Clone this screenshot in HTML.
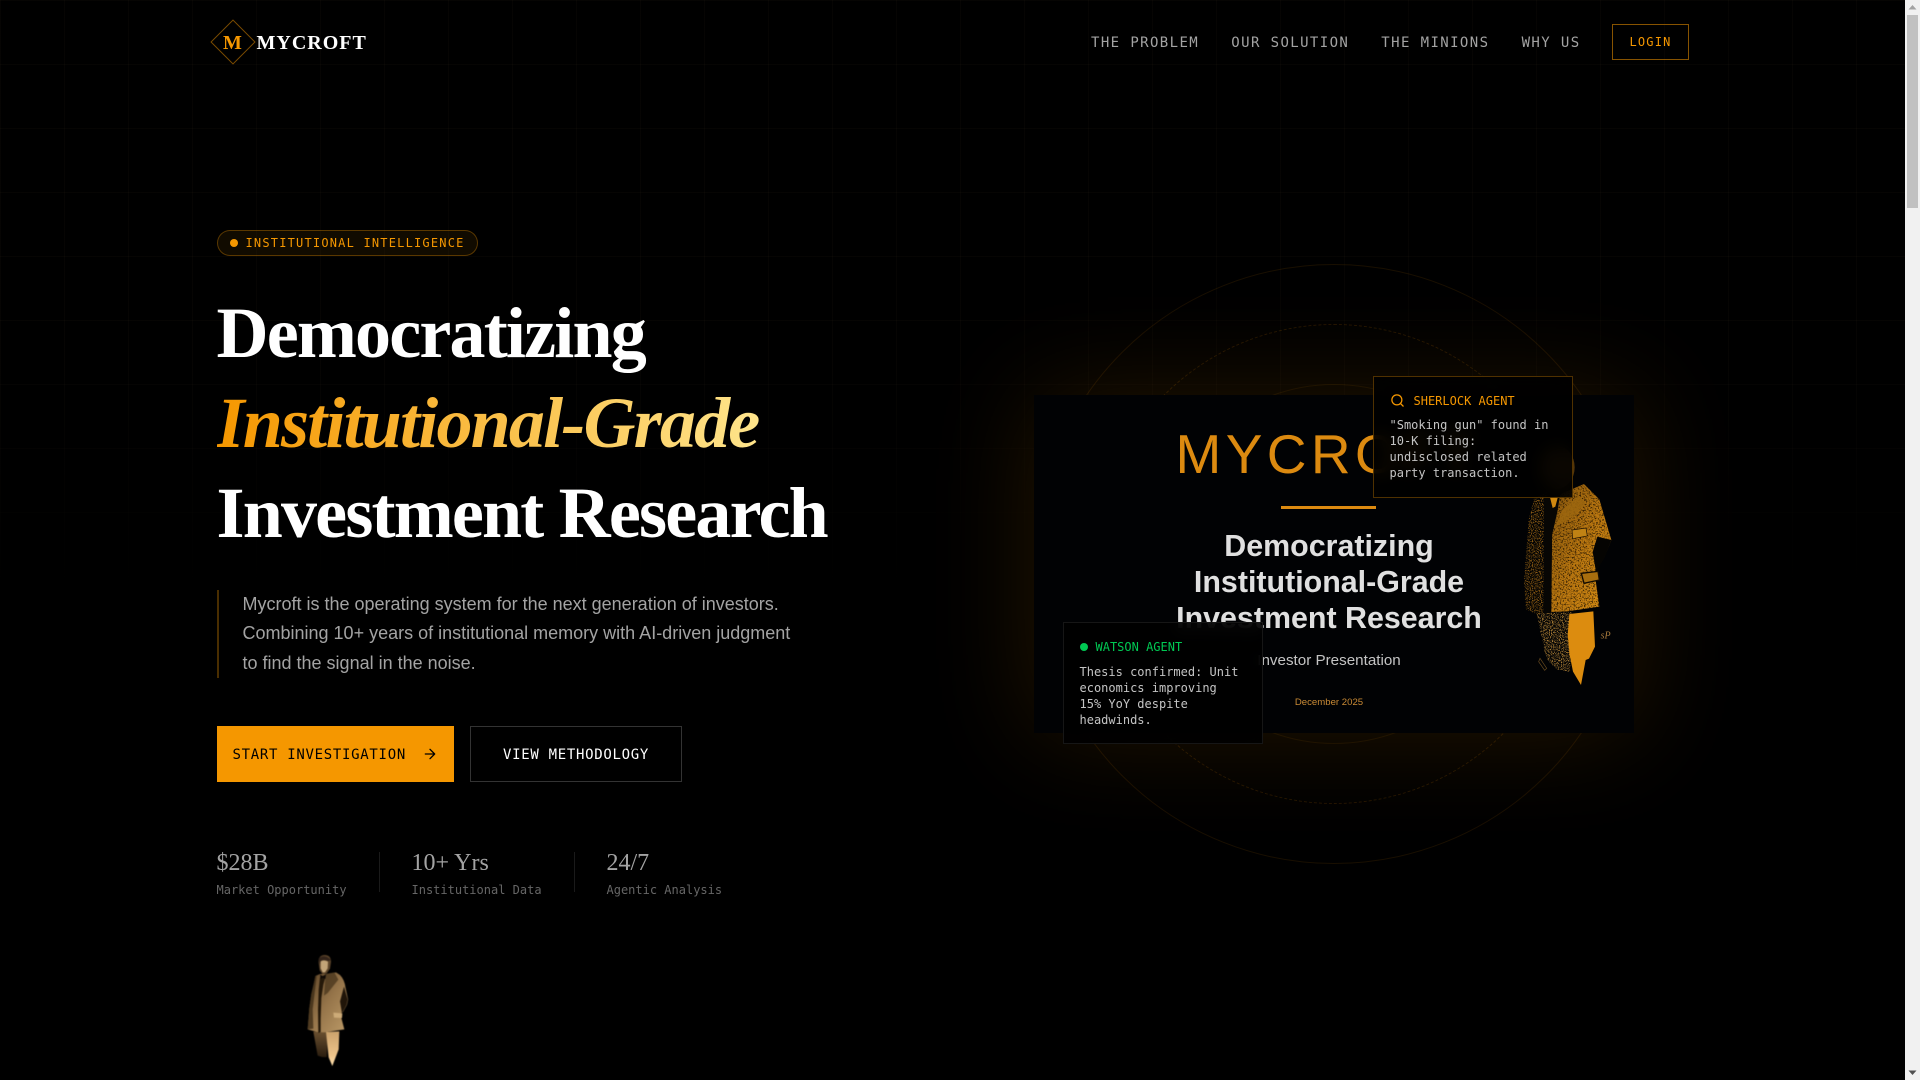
<!DOCTYPE html>
<html lang="en">
<head>
<meta charset="utf-8">
<title>Mycroft</title>
<style>
*{box-sizing:border-box;margin:0;padding:0}
html,body{width:1920px;height:1080px;overflow:hidden;background:#000}
body{position:relative;font-family:"Liberation Sans",sans-serif;color:#fff}
.a{position:absolute;white-space:nowrap}
.m{font-family:"DejaVu Sans Mono",monospace}
.s{font-family:"Liberation Serif",serif}
.grid{left:0;top:0;width:1905px;height:1080px;background-image:linear-gradient(to right,rgba(245,200,120,.024) 1px,transparent 1px),linear-gradient(to bottom,rgba(245,200,120,.024) 1px,transparent 1px);background-size:64px 64px;-webkit-mask-image:linear-gradient(to bottom,#000 0,#000 33%,transparent 55%);mask-image:linear-gradient(to bottom,#000 0,#000 33%,transparent 55%)}
.nav{font-size:14px;letter-spacing:1.4px;color:#a3a3a3;top:33px;line-height:20px}
h1{position:absolute;left:216.5px;top:288px;font:bold 72px/90px "Liberation Serif",serif;letter-spacing:-1.8px;white-space:nowrap}
h1 em{background:linear-gradient(90deg,#f59700,#ffe58c);-webkit-background-clip:text;background-clip:text;color:transparent;-webkit-text-fill-color:transparent;padding-right:4px}
.val{font:24px/24px "Liberation Serif",serif;color:#a3a3a3;top:851px}
.lab{font-size:12px;line-height:16px;color:#666;top:882px}
.ring{border-radius:50%}
.card{background:rgba(0,0,0,.88);-webkit-backdrop-filter:blur(8px);backdrop-filter:blur(8px);width:200px;height:122px}
.card p{position:absolute;left:15.5px;font:12px/16px "DejaVu Sans Mono",monospace;color:#c4c4c4;white-space:nowrap}
.card b{position:absolute;font:12px/16px "DejaVu Sans Mono",monospace;white-space:nowrap}
</style>
</head>
<body>
<div class="a grid"></div>

<!-- nav -->
<div class="a" style="left:216.5px;top:25.5px;width:32px;height:32px;transform:rotate(45deg);border:1px solid rgba(245,151,0,.5)"></div>
<div class="a s" style="left:216.5px;top:31px;width:32px;text-align:center;font-weight:bold;font-size:20px;line-height:24px;color:#f59700">M</div>
<div class="a s" style="left:256.5px;top:31px;font-weight:bold;font-size:20px;line-height:24px;letter-spacing:1px;color:#fff">MYCROFT</div>
<div class="a m nav" style="left:1091px">THE PROBLEM</div>
<div class="a m nav" style="left:1231.3px">OUR SOLUTION</div>
<div class="a m nav" style="left:1381.3px">THE MINIONS</div>
<div class="a m nav" style="left:1521.6px">WHY US</div>
<div class="a m" style="left:1612px;top:24px;width:77px;height:36px;border:1px solid rgba(245,151,0,.55);color:#f59700;font-size:12px;letter-spacing:1.2px;line-height:34px;text-align:center">LOGIN</div>

<!-- badge -->
<div class="a" style="left:216.5px;top:230px;width:261.5px;height:26px;border-radius:13px;border:1px solid rgba(245,151,0,.32);background:rgba(245,151,0,.07)"></div>
<div class="a" style="left:230px;top:239px;width:8px;height:8px;border-radius:50%;background:#f59700"></div>
<div class="a m" style="left:245.5px;top:235px;font-size:12px;line-height:16px;letter-spacing:1.2px;color:#f59700">INSTITUTIONAL INTELLIGENCE</div>

<h1>Democratizing<br><em>Institutional-Grade</em><br>Investment Research</h1>

<!-- paragraph -->
<div class="a" style="left:216.5px;top:590px;width:2px;height:88px;background:rgba(245,151,0,.3)"></div>
<div class="a" style="left:242.5px;top:590px;font-size:18px;line-height:29.25px;color:#a3a3a3">Mycroft is the operating system for the next generation of investors.<br>Combining 10+ years of institutional memory with AI-driven judgment<br>to find the signal in the noise.</div>

<!-- buttons -->
<div class="a" style="left:216.5px;top:726px;width:237px;height:56px;background:#f59700"></div>
<div class="a m" style="left:232.5px;top:745px;font-size:14px;line-height:20px;letter-spacing:.7px;color:#000">START INVESTIGATION</div>
<svg class="a" style="left:422px;top:746px" width="16" height="16" viewBox="0 0 24 24" fill="none" stroke="#000" stroke-width="2" stroke-linecap="round" stroke-linejoin="round"><path d="M5 12h14M12 5l7 7-7 7"/></svg>
<div class="a m" style="left:470px;top:726px;width:212px;height:56px;border:1px solid #333;color:#fff;font-size:14px;line-height:56px;letter-spacing:.7px;text-align:center">VIEW METHODOLOGY</div>

<!-- stats -->
<div class="a val" style="left:216.5px">$28B</div>
<div class="a m lab" style="left:216.5px">Market Opportunity</div>
<div class="a" style="left:379px;top:852px;width:1px;height:40px;background:#1a1a1a"></div>
<div class="a val" style="left:411.5px">10+ Yrs</div>
<div class="a m lab" style="left:411.5px">Institutional Data</div>
<div class="a" style="left:574px;top:852px;width:1px;height:40px;background:#1a1a1a"></div>
<div class="a val" style="left:606.5px">24/7</div>
<div class="a m lab" style="left:606.5px">Agentic Analysis</div>

<!-- small figure -->
<svg class="a" style="left:270px;top:940px;filter:blur(.6px)" width="110" height="140" viewBox="0 0 330 420">
<defs>
<linearGradient id="sc" x1="0" y1="0" x2="1" y2="1"><stop offset="0" stop-color="#5a4226"/><stop offset=".5" stop-color="#96754a"/><stop offset="1" stop-color="#bd9b68"/></linearGradient>
<linearGradient id="sl" x1="0" y1="0" x2="0" y2="1"><stop offset="0" stop-color="#caa26c"/><stop offset=".7" stop-color="#eec48a"/><stop offset="1" stop-color="#ffe2b0"/></linearGradient>
<linearGradient id="sd" x1="0" y1="0" x2="0" y2="1"><stop offset="0" stop-color="#6a5030"/><stop offset="1" stop-color="#2a1d0f"/></linearGradient>
</defs>
<!-- legs -->
<path d="M130 275l13 72q14 6 27 4l4-76z" fill="url(#sd)"/>
<path d="M168 276l40-2-2 54-19 50-11-26z" fill="url(#sl)"/>
<!-- coat -->
<path d="M136 108l14-6 18 0 30-5 12 8q14 14 17 40l7 33-3 16-12 22-8 6 12 46-60 9-22-1-28-8 5-64 6-42 8-34z" fill="url(#sc)"/>
<path d="M113 268l5-64 6-42 8-34 4-20 4 0-6 50-6 50 2 58z" fill="#3a2a14" opacity=".75"/>
<path d="M150 112l16 0-6 22-6 40-2 62 0 40-7 3-1-70 2-60z" fill="#241809"/>
<path d="M167 102l26-5 12 22-32 40-11 8z" fill="#4c381e" opacity=".8"/>
<path d="M190 218l27 2-1 14-24-1z" fill="#cdab78"/>
<path d="M222 140l11 38-3 16-14 26-6-36z" fill="#201509"/>
<!-- head -->
<path d="M146 68q-1-23 18-23t19 21l-3 20-10 14-12 3-9-12z" fill="#5a4329"/>
<path d="M152 64q10-6 22 1l-1 20-8 12-7 0-6-12z" fill="#c2a478"/>
<path d="M146 56q16-16 37 4l-8 3q-12-6-23 0l-3 10z" fill="#33241a"/>
<path d="M150 104l8 4 10-5-2 14-8-4-6 4z" fill="#0e0804"/>
</svg>

<!-- hero visual -->
<div class="a ring" style="left:1033.5px;top:264px;width:600px;height:600px;border:1px solid rgba(245,151,0,.1)"></div>
<div class="a ring" style="left:1093.5px;top:324px;width:480px;height:480px;border:1px dashed rgba(245,151,0,.14)"></div>
<div class="a ring" style="left:1153.5px;top:384px;width:360px;height:360px;border:1px solid rgba(245,151,0,.08)"></div>

<div class="a" style="left:1033.5px;top:395px;width:600px;height:338px;background:#010204;box-shadow:0 0 100px rgba(245,151,0,.14)"></div>
<div class="a" style="left:1175.5px;top:423px;font-size:55px;line-height:62px;letter-spacing:4.4px;color:#dc8a10">MYCROFT</div>
<div class="a" style="left:1281px;top:506px;width:95px;height:2.5px;background:#dc8a10"></div>
<div class="a" style="left:1029px;top:527.5px;width:600px;text-align:center;font-weight:bold;font-size:30.4px;line-height:36.4px;color:#e0e0e0">Democratizing<br>Institutional-Grade<br>Investment Research</div>
<div class="a" style="left:1029px;top:651px;width:600px;text-align:center;font-size:15.2px;line-height:20px;color:#c4c4c4">Investor Presentation</div>
<div class="a" style="left:1029px;top:696px;width:600px;text-align:center;font-size:9.6px;line-height:14px;color:#c98a35">December 2025</div>

<!-- big figure -->
<svg class="a" style="left:1360px;top:360px" width="280" height="340" viewBox="0 0 840 1020">
<defs>
<filter id="sp" x="0" y="0" width="100%" height="100%"><feTurbulence type="fractalNoise" baseFrequency=".3" numOctaves="2" seed="8" result="n"/><feColorMatrix in="n" values="0 0 0 0 0 0 0 0 0 0 0 0 0 0 0 6 0 0 0 -2.9" result="k"/><feComposite in="SourceGraphic" in2="k" operator="in"/></filter>
<filter id="sk" x="0" y="0" width="100%" height="100%"><feTurbulence type="fractalNoise" baseFrequency=".22" numOctaves="3" seed="21" result="n"/><feColorMatrix in="n" values="0 0 0 0 0 0 0 0 0 0 0 0 0 0 0 5 0 0 0 -2.5" result="k"/><feComposite in="SourceGraphic" in2="k" operator="in"/></filter>
<linearGradient id="co" x1="0" y1="0" x2="1" y2="1"><stop offset="0" stop-color="#80520c"/><stop offset=".5" stop-color="#b87610"/><stop offset="1" stop-color="#d88e14"/></linearGradient>
</defs>
<ellipse cx="592" cy="322" rx="52" ry="64" fill="#54360a"/>
<!-- left leg speckled -->
<path d="M530 760l24 115 8 25 28 28 40 8 6-180z" fill="#a87c34" filter="url(#sp)"/>
<path d="M540 895l20 30-6 6-18-26z" fill="none" stroke="#6a4c20" stroke-width="2"/>
<!-- right leg solid -->
<path d="M628 762l72-8 5 106-18 36-10 4-14 75-24-40-10-50-6-60z" fill="#dc8c0f"/>
<!-- coat: left panel -->
<path d="M522 416l40-20 0 360-32 6-32-14-6-88 8-100 6-80z" fill="#8a5a12" filter="url(#sp)"/>
<!-- coat: right panel -->
<path d="M574 440l32-40 66-28 46 46 36 122-20 50-30 50 14 100-96 14-48 2 2-200z" fill="url(#co)"/>
<!-- shading -->
<path d="M574 440l32-40 66-28 46 46 36 122-20 50-30 50 14 100-96 14-48 2 2-200z" fill="#1a0f02" filter="url(#sk)" opacity=".8"/>
<path d="M552 414l48-8-8 50-16 70-4 232-22 2z" fill="#070604"/>
<path d="M570 412l24-2-8 30-8 4z" fill="#d08810"/>
<path d="M588 500l18-50 50-44 22 24-40 40z" fill="#9c660e" opacity=".85"/>
<path d="M636 510l42-6 4 24-44 8z" fill="#c08214" stroke="#1a0f02" stroke-width="2"/>
<path d="M664 640l50-6 4 26-46 10z" fill="#a86e0e" stroke="#120b02" stroke-width="4"/>
<path d="M712 530l42 10-18 48-28 48-10-60z" fill="#050402"/>
<text x="722" y="835" font-family="Liberation Serif,serif" font-size="30" font-style="italic" fill="#a87a3c">sP</text>
</svg>

<!-- sherlock card -->
<div class="a card" style="left:1373px;top:376px;border:1px solid rgba(245,151,0,.32)">
<svg style="position:absolute;left:16px;top:16px" width="15" height="15" viewBox="0 0 24 24" fill="none" stroke="#f59700" stroke-width="2" stroke-linecap="round"><circle cx="11" cy="11" r="8"/><path d="M21 21l-4.3-4.3"/></svg>
<b style="left:39.5px;top:16px;color:#f59700;font-weight:normal">SHERLOCK AGENT</b>
<p style="top:40px">"Smoking gun" found in<br>10-K filing:<br>undisclosed related<br>party transaction.</p>
</div>

<!-- watson card -->
<div class="a card" style="left:1063px;top:622px;border:1px solid #161616">
<div style="position:absolute;left:16px;top:20px;width:8px;height:8px;border-radius:50%;background:#00c853"></div>
<b style="left:31.5px;top:16px;color:#00c853;font-weight:normal">WATSON AGENT</b>
<p style="top:40.5px">Thesis confirmed: Unit<br>economics improving<br>15% YoY despite<br>headwinds.</p>
</div>

<!-- scrollbar -->
<div class="a" style="left:1905px;top:0;width:15px;height:1080px;background:#f1f1f1"></div>
<div class="a" style="left:1907px;top:15px;width:11px;height:193px;background:#c1c1c1"></div>
<svg class="a" style="left:1905px;top:0" width="15" height="15"><path d="M3.5 9.5h8L7.5 5z" fill="#a3a3a3"/></svg>
<svg class="a" style="left:1905px;top:1065px" width="15" height="15"><path d="M3.5 5.5h8L7.5 10z" fill="#505050"/></svg>
</body>
</html>
